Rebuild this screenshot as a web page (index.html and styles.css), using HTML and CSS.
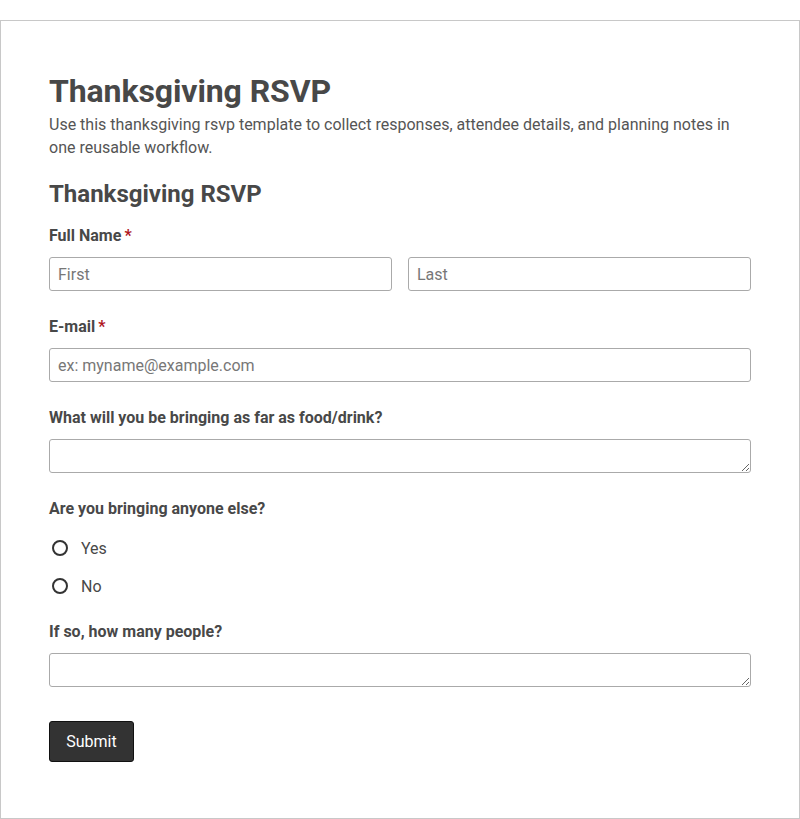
FILE: index.html
```html
<!DOCTYPE html>
<html>
    <head>
        <title>Thanksgiving RSVP</title>
        <link rel="stylesheet" href="styles.css">
    </head>
    <body>
    <div class="card">
        <h1 class="page-title">Thanksgiving RSVP</h1>
        <p class="page-intro">Use this thanksgiving rsvp template to collect responses, attendee details, and planning notes in one reusable workflow.</p>

        <form class="rsvp-form">
            <h2 class="form-title">Thanksgiving RSVP</h2>

            <div class="field">
                <label class="field-label">Full Name<span class="required">*</span></label>
                <div class="name-row">
                    <input type="text" class="input-field" placeholder="First">
                    <input type="text" class="input-field" placeholder="Last">
                </div>
            </div>

            <div class="field">
                <label class="field-label">E-mail<span class="required">*</span></label>
                <input type="email" class="input-field" placeholder="ex: myname@example.com">
            </div>

            <div class="field">
                <label class="field-label">What will you be bringing as far as food/drink?</label>
                <textarea class="input-field text-area"></textarea>
            </div>

            <div class="field field-radio">
                <label class="field-label">Are you bringing anyone else?</label>
                <label class="radio-option"><input type="radio" name="guests" class="radio-input"> Yes</label>
                <label class="radio-option"><input type="radio" name="guests" class="radio-input"> No</label>
            </div>

            <div class="field">
                <label class="field-label">If so, how many people?</label>
                <textarea class="input-field text-area"></textarea>
            </div>

            <button type="button" class="button-submit">Submit</button>
        </form>
    </div>
    </body>
</html>
```

FILE: styles.css
```css
body {
    margin: 0;
    padding-top: 20px;
    font-family: Roboto, "Liberation Sans", sans-serif;
    color: #444;
    background: #fff;
}

.card {
    border: 1px solid #c8c8c8;
    padding: 51px 48px 56px 48px;
    box-sizing: border-box;
    width: 800px;
    min-height: 799px;
}

.page-title {
    font-size: 32px;
    line-height: 38px;
    font-weight: 700;
    letter-spacing: -0.1px;
    margin: 0;
    color: #484848;
}

.page-intro {
    font-size: 16px;
    line-height: 23px;
    margin: 3px 0 20px 0;
    color: #555;
}

.form-title {
    font-size: 24px;
    line-height: 30px;
    font-weight: 700;
    margin: 0 0 17px 0;
    color: #484848;
}

.field {
    display: flex;
    flex-direction: column;
    margin-bottom: 26px;
}

.field-label {
    font-size: 16px;
    line-height: 20px;
    font-weight: 700;
    margin-bottom: 11px;
    color: #484848;
}

.required {
    color: #b0171f;
    margin-left: 3px;
}

.name-row {
    display: flex;
    gap: 16px;
}

.input-field {
    height: 34px;
    box-sizing: border-box;
    border: 1px solid #aaa;
    border-radius: 3px;
    padding: 0 8px;
    font-family: Roboto, "Liberation Sans", sans-serif;
    font-size: 16px;
    color: #444;
    margin: 0;
}

.name-row .input-field {
    flex: 1;
    min-width: 0;
}

.input-field::placeholder {
    color: #777;
}

.text-area {
    display: block;
    width: 100%;
    resize: vertical;
    padding: 6px 8px;
}

.field-radio {
    margin-bottom: 17px;
}

.field-radio .field-label {
    margin-bottom: 10px;
}

.radio-option {
    display: flex;
    align-items: center;
    height: 38px;
    font-size: 16px;
    color: #484848;
}

.radio-input {
    appearance: none;
    width: 16px;
    height: 16px;
    margin: 0 13px 0 3px;
    border: 2px solid #333;
    border-radius: 50%;
    box-sizing: border-box;
}

.button-submit {
    margin-top: 8px;
    width: 85px;
    height: 41px;
    padding: 0;
    background-color: #333;
    color: #fff;
    border: 1px solid #111;
    border-radius: 3px;
    font-family: Roboto, "Liberation Sans", sans-serif;
    font-size: 16px;
}
```
